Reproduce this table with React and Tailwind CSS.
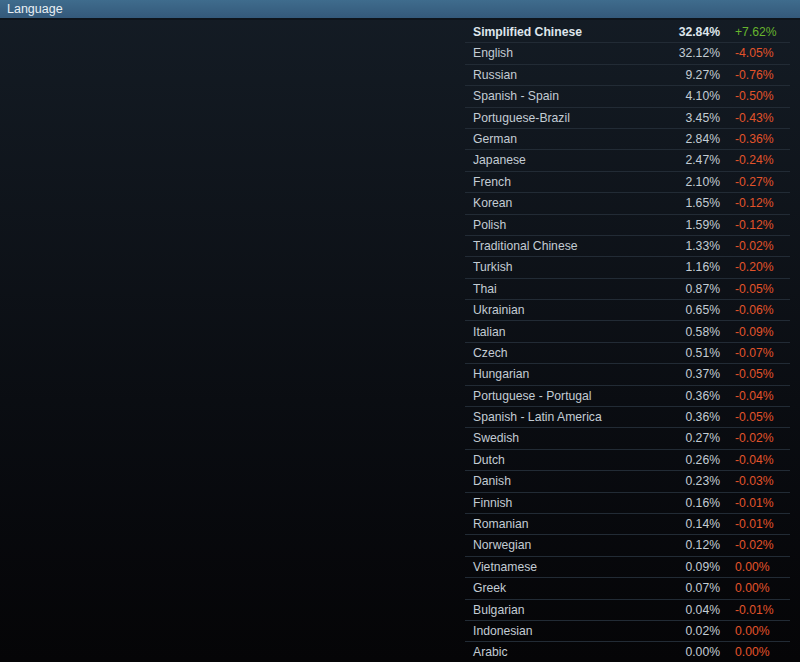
import React from 'react';

const rows = [
    ['Simplified Chinese', '32.84%', '+7.62%'],
    ['English', '32.12%', '-4.05%'],
    ['Russian', '9.27%', '-0.76%'],
    ['Spanish - Spain', '4.10%', '-0.50%'],
    ['Portuguese-Brazil', '3.45%', '-0.43%'],
    ['German', '2.84%', '-0.36%'],
    ['Japanese', '2.47%', '-0.24%'],
    ['French', '2.10%', '-0.27%'],
    ['Korean', '1.65%', '-0.12%'],
    ['Polish', '1.59%', '-0.12%'],
    ['Traditional Chinese', '1.33%', '-0.02%'],
    ['Turkish', '1.16%', '-0.20%'],
    ['Thai', '0.87%', '-0.05%'],
    ['Ukrainian', '0.65%', '-0.06%'],
    ['Italian', '0.58%', '-0.09%'],
    ['Czech', '0.51%', '-0.07%'],
    ['Hungarian', '0.37%', '-0.05%'],
    ['Portuguese - Portugal', '0.36%', '-0.04%'],
    ['Spanish - Latin America', '0.36%', '-0.05%'],
    ['Swedish', '0.27%', '-0.02%'],
    ['Dutch', '0.26%', '-0.04%'],
    ['Danish', '0.23%', '-0.03%'],
    ['Finnish', '0.16%', '-0.01%'],
    ['Romanian', '0.14%', '-0.01%'],
    ['Norwegian', '0.12%', '-0.02%'],
    ['Vietnamese', '0.09%', '0.00%'],
    ['Greek', '0.07%', '0.00%'],
    ['Bulgarian', '0.04%', '-0.01%'],
    ['Indonesian', '0.02%', '0.00%'],
    ['Arabic', '0.00%', '0.00%'],
];

const App = () => {
    return (
        <div
            className="h-[662px] overflow-hidden bg-linear-to-b from-[#141c25] to-[#050507] text-[12.2px]"
            style={{ fontFamily: "Arial, 'Liberation Sans', sans-serif" }}
        >
            {/* Section header */}
            <div className="h-[18px] bg-linear-to-b from-[#3f6c8d] to-[#34597a] px-[7px] leading-[18px] text-[12.5px] text-[#e9eff4] border-b-2 border-[#0e141b] box-content">
                Language
            </div>

            <div className="flex justify-end pr-[10px] pt-[2px]">
                <div className="w-[325px]">
                    {rows.map(([name, pct, change], i) => {
                        const first = i === 0;
                        return (
                            <div
                                key={name}
                                className={`flex items-center h-[21.4px] border-b border-[#222b35] ${first ? 'font-bold text-[#dfe6ec]' : 'text-[#c3ccd4]'}`}
                            >
                                <div className="flex-1 pl-2 whitespace-nowrap">{name}</div>
                                <div className="text-right">{pct}</div>
                                <div className={`w-[55px] ml-[15px] ${change.startsWith('+') ? 'text-[#67b52e]' : 'text-[#e2532a]'} font-normal`}>
                                    {change}
                                </div>
                            </div>
                        );
                    })}
                </div>
            </div>
        </div>
    );
};

export default App;
